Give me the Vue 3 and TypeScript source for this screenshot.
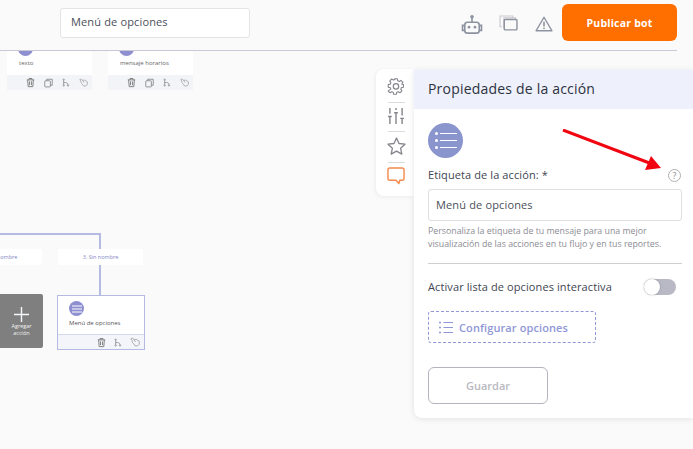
<script setup lang="ts">
const topNodes = [
  { label: 'texto', left: 7 },
  { label: 'mensaje horarios', left: 108 },
]
</script>

<template>
  <div class="page">
    <header class="topbar">
      <div class="name-input">Menú de opciones</div>
      <div class="top-actions">
        <svg class="ic-bot" width="22" height="19" viewBox="0 0 24 21" fill="none" stroke="#8d93a0" stroke-width="1.8">
          <circle cx="12" cy="2" r="2" fill="#8d93a0" stroke="none" />
          <path d="M12 3v5" />
          <rect x="4" y="8" width="16" height="12" rx="3" />
          <path d="M4 11.500H1.500v5.500H4M20 11.500h2.500v5.500H20" />
          <circle cx="8.700" cy="13.500" r="1.500" fill="#8d93a0" stroke="none" />
          <circle cx="15.300" cy="13.500" r="1.500" fill="#8d93a0" stroke="none" />
        </svg>
        <svg class="ic-copy" width="19" height="16" viewBox="0 0 20 17" fill="none">
          <path d="M3 12.500H1V1h13.500v2" stroke="#c9c9cf" stroke-width="1.200" />
          <path d="M5 14V3h12.500v2" stroke="#c9c9cf" stroke-width="1.200" />
          <rect x="5.500" y="4.800" width="13.500" height="11" rx="1" stroke="#8d93a0" stroke-width="1.500" fill="#fafafa" />
        </svg>
        <svg class="ic-warn" width="18" height="18" viewBox="0 0 20 18" fill="none">
          <path d="M10 1.500 1.200 16.500h17.600z" stroke="#8d93a0" stroke-width="1.600" stroke-linejoin="round" />
          <path d="M10 6.500v5.200" stroke="#8d93a0" stroke-width="1.800" />
          <circle cx="10" cy="13.800" r="1" fill="#8d93a0" />
        </svg>
        <button class="publish">Publicar bot</button>
      </div>
    </header>

    <div v-for="n in topNodes" :key="n.label" class="top-node" :style="{ left: n.left + 'px' }">
      <div class="top-node-body">
        <span class="dot clipped"></span>
        <span class="node-text">{{ n.label }}</span>
      </div>
      <div class="node-tools">
        <svg width="9" height="11" viewBox="0 0 12 13" fill="none" stroke="#808080" stroke-width="1.300"><path d="M1 3h10M4 3V1.200h4V3M2.200 3l.7 9h6.200l.7-9M4.700 5v5M7.300 5v5" /></svg>
        <svg width="9" height="10" viewBox="0 0 12 12" fill="none" stroke="#8a8a8a" stroke-width="1.200"><rect x="1" y="3" width="7.500" height="8.200" rx="1" /><path d="M3.500 3V1h7.500v8H8.500" /></svg>
        <svg width="8" height="11" viewBox="0 0 12 12" fill="none" stroke="#8a8a8a" stroke-width="1.200"><circle cx="2.500" cy="1.800" r="1" /><circle cx="2.500" cy="10.400" r="1" /><circle cx="9" cy="10.400" r="1" /><path d="M2.500 3v6.400M2.500 6c3 0 6.500 0 6.500 3.400" /></svg>
        <svg width="9" height="9" viewBox="0 0 13 12" fill="none" stroke="#a0a0a0" stroke-width="1.100"><path d="M1 2 3 1l2.500 2L8 2.500 12 5v4l-2 2H6.500L5 8.500 2.500 6 3 4z" /><path d="M5.500 3 7 6" /></svg>
      </div>
    </div>

    <div class="connector-h"></div>
    <div class="connector-v"></div>
    <div class="branch branch-left">2. Sin nombre</div>
    <div class="branch branch-right">3. Sin nombre</div>

    <div class="add-action">
      <svg class="plus" width="15" height="15" viewBox="0 0 15 15" stroke="#f4f8fb" stroke-width="1.400">
        <path d="M0 7.500h15M7.500 0v15" />
      </svg>
      <span class="add-text">Agregar<br />acción</span>
    </div>

    <div class="menu-node">
      <div class="menu-body">
        <span class="dot">
          <svg width="10" height="8" viewBox="0 0 10 8" stroke="#fff" stroke-width="1"><path d="M0 1h10M0 4h10M0 7h10" /></svg>
        </span>
        <span class="node-text dark">Menú de opciones</span>
      </div>
      <div class="menu-tools">
        <svg width="9" height="11" viewBox="0 0 12 13" fill="none" stroke="#808080" stroke-width="1.300"><path d="M1 3h10M4 3V1.200h4V3M2.200 3l.7 9h6.200l.7-9M4.700 5v5M7.300 5v5" /></svg>
        <svg width="8" height="11" viewBox="0 0 12 12" fill="none" stroke="#8a8a8a" stroke-width="1.200"><circle cx="2.500" cy="1.800" r="1" /><circle cx="2.500" cy="10.400" r="1" /><circle cx="9" cy="10.400" r="1" /><path d="M2.500 3v6.400M2.500 6c3 0 6.500 0 6.500 3.400" /></svg>
        <svg width="10" height="10" viewBox="0 0 13 12" fill="none" stroke="#a0a0a0" stroke-width="1.100"><path d="M1 2 3 1l2.500 2L8 2.500 12 5v4l-2 2H6.500L5 8.500 2.500 6 3 4z" /><path d="M5.500 3 7 6" /></svg>
      </div>
    </div>

    <div class="side-wrap">
      <nav class="tabs">
        <svg class="tab" width="18" height="18" viewBox="0 0 24 24" fill="none" stroke="#85858d" stroke-width="1.600" stroke-linejoin="round">
          <path d="M10 2h4l.6 3 2.200 1 2.600-1.600 2.800 2.900L20.600 10l.4 0 2 .6v3.800l-3 .7-.9 2.200 1.600 2.600-2.800 2.800-2.600-1.600-2.200.9-.6 3h-4l-.6-3-2.200-.9-2.600 1.600-2.800-2.800L4.400 17.300 3.500 15.100l-3-.7v-3.800l3-.7.9-2.200L2.800 5.100 5.600 2.300l2.600 1.600 2.200-.9z" transform="translate(1.200 .6) scale(.9)" />
          <circle cx="12" cy="12.500" r="3.600" />
        </svg>
        <i class="sep"></i>
        <svg class="tab" width="18" height="16" viewBox="0 0 19 17" fill="none" stroke="#85858d" stroke-width="1.500">
          <path d="M3 0v6M1 9h4M3 9v8M9.500 0v2M7.500 5h4M9.500 5v12M16 0v8M14 11h4M16 11v6" />
        </svg>
        <i class="sep"></i>
        <svg class="tab" width="19" height="18" viewBox="0 0 19 18" fill="none" stroke="#85858d" stroke-width="1.300" stroke-linejoin="round">
          <path d="m9.500 1 2.500 5.500 6 .7-4.400 4 1.200 5.900-5.300-3-5.300 3 1.200-5.900-4.400-4 6-.7z" />
        </svg>
        <i class="sep"></i>
        <svg class="tab chat" width="18" height="18" viewBox="0 0 19 19" fill="none" stroke="#f58a4b" stroke-width="1.500" stroke-linejoin="round">
          <path d="M3 1h13a2 2 0 0 1 2 2v9a2 2 0 0 1-2 2h-2.500l-1 3.500L9.500 14H3a2 2 0 0 1-2-2V3a2 2 0 0 1 2-2z" />
        </svg>
      </nav>

      <section class="panel">
        <h2 class="panel-title">Propiedades de la acción</h2>
        <div class="panel-body">
          <span class="big-dot">
            <svg width="22" height="17" viewBox="0 0 22 17" fill="none">
              <g fill="#fff"><circle cx="1.500" cy="1.500" r="1.500" /><circle cx="1.500" cy="8.500" r="1.500" /><circle cx="1.500" cy="15.500" r="1.500" /></g>
              <path d="M5 1.500h17M5 8.500h17M5 15.500h17" stroke="#fff" stroke-width="1" />
            </svg>
          </span>
          <div class="label-row">
            <span>Etiqueta de la acción: *</span>
            <span class="help">?</span>
          </div>
          <div class="field">Menú de opciones</div>
          <p class="hint">Personaliza la etiqueta de tu mensaje para una mejor visualización de las acciones en tu flujo y en tus reportes.</p>
          <hr class="rule" />
          <div class="toggle-row">
            <span>Activar lista de opciones interactiva</span>
            <span class="switch"><span class="knob"></span></span>
          </div>
          <button class="config">
            <svg width="14" height="13" viewBox="0 0 14 13" fill="none">
              <g fill="#8f97d6"><circle cx="1" cy="1.500" r="1" /><circle cx="1" cy="6.500" r="1" /><circle cx="1" cy="11.500" r="1" /></g>
              <path d="M4.500 1.500H14M4.500 6.500H14M4.500 11.500H14" stroke="#8f97d6" stroke-width="1.200" />
            </svg>
            Configurar opciones
          </button>
          <button class="save">Guardar</button>
        </div>
      </section>
    </div>

    <svg class="arrow" width="120" height="50" viewBox="0 0 120 50">
      <path d="M1 1 90 35" stroke="#f00511" stroke-width="3" />
      <path d="M99 39 83 41 89 27z" fill="#f00511" />
    </svg>
  </div>
</template>

<style>
html, body { margin: 0; padding: 0; }
</style>

<style scoped>
.page {
  position: relative;
  width: 693px;
  height: 449px;
  overflow: hidden;
  background: #fafafa;
  font-family: "Open Sans", "Noto Sans", sans-serif;
  color: #3d4450;
}
.topbar {
  box-sizing: border-box;
  width: 677px;
  height: 51px;
  border-bottom: 1px solid #c9c9d6;
  padding: 4px 0 0 60px;
  display: flex;
  justify-content: space-between;
  align-items: flex-start;
}
.name-input {
  box-sizing: border-box;
  width: 190px;
  height: 30px;
  margin-top: 4px;
  background: #fff;
  border: 1px solid #e3e3e8;
  border-radius: 3px;
  padding-left: 10px;
  font-size: 11px;
  line-height: 26px;
  letter-spacing: 0.15px;
  color: #4a4f5a;
}
.top-actions { display: flex; align-items: flex-start; }
.ic-bot { margin-top: 11px; }
.ic-copy { margin: 11px 0 0 16px; }
.ic-warn { margin: 11px 0 0 17px; }
.publish {
  width: 115px;
  height: 37px;
  margin-left: 9px;
  border: 0;
  border-radius: 6px;
  background: #ff6f00;
  color: #fff;
  font: 700 10.500px "Open Sans", sans-serif;
  letter-spacing: 0.2px;
}
.top-node {
  position: absolute;
  top: 51px;
  width: 85px;
}
.top-node-body {
  position: relative;
  height: 24px;
  background: #fff;
  overflow: hidden;
}
.dot {
  width: 15px;
  height: 15px;
  border-radius: 50%;
  background: #8d8fd0;
  display: flex;
  align-items: center;
  justify-content: center;
}
.dot.clipped { position: absolute; top: -10px; left: 11px; }
.node-text {
  position: absolute;
  left: 12px;
  top: 7px;
  font-size: 6px;
  line-height: 10px;
  color: #666;
  white-space: nowrap;
}
.node-tools {
  height: 15px;
  background: #f3f4f8;
  display: flex;
  justify-content: flex-end;
  align-items: center;
  gap: 9px;
  padding-right: 4px;
}
.connector-h {
  position: absolute;
  left: 0;
  top: 233px;
  width: 100px;
  height: 2px;
  background: #b5bae3;
}
.connector-v {
  position: absolute;
  left: 99px;
  top: 233px;
  width: 2px;
  height: 62px;
  background: #b5bae3;
}
.branch {
  position: absolute;
  top: 249px;
  height: 16px;
  width: 85px;
  background: #fff;
  border-radius: 2px;
  font-size: 5.500px;
  line-height: 16px;
  color: #8488c4;
  text-align: center;
}
.branch-left { left: -43px; }
.branch-right { left: 58px; }
.add-action {
  position: absolute;
  left: 0;
  top: 294px;
  box-sizing: border-box;
  width: 43px;
  height: 54px;
  padding-top: 13px;
  background: #7f7f7f;
  border-radius: 0 2px 2px 0;
  color: #fff;
  text-align: center;
}
.plus { display: block; margin: 0 auto 1px; }
.add-text { display: block; font-size: 5.500px; line-height: 7px; color: #f4f4f4; }
.menu-node {
  position: absolute;
  left: 57px;
  top: 295px;
  box-sizing: border-box;
  width: 88px;
  height: 55px;
  border: 1px solid #b5bae3;
  background: #fff;
}
.menu-body { position: relative; height: 38px; }
.menu-body .dot { position: absolute; left: 11px; top: 5px; }
.menu-body .node-text { left: 11px; top: 22px; }
.node-text.dark { color: #555; }
.menu-tools {
  height: 14px;
  border-top: 1px solid #d6d9ee;
  background: #f4f5fb;
  display: flex;
  justify-content: flex-end;
  align-items: center;
  gap: 8px;
  padding-right: 4px;
}
.side-wrap {
  position: absolute;
  left: 376px;
  top: 69px;
  display: flex;
  align-items: flex-start;
}
.tabs {
  box-sizing: border-box;
  width: 38px;
  height: 127px;
  padding: 8px 0 0 2px;
  background: #fff;
  border-radius: 8px 0 0 8px;
  box-shadow: -1px 1px 4px rgba(0, 0, 0, .06);
  display: flex;
  flex-direction: column;
  align-items: center;
}
.tab { flex: none; }
.chat { margin-top: -1px; }
.sep { display: block; flex: none; width: 17px; height: 1px; margin: 7px 0 5px; background: #dcdcdc; }
.panel {
  margin-top: 1px;
  width: 279px;
  height: 348px;
  background: #fff;
  border-radius: 0 0 0 8px;
  box-shadow: 0 1px 6px rgba(0, 0, 0, .1);
}
.panel-title {
  margin: 0;
  height: 39px;
  background: #eef0fb;
  padding-left: 14px;
  font-size: 14px;
  font-weight: 400;
  line-height: 37px;
  letter-spacing: 0.2px;
  color: #2c3240;
}
.panel-body {
  box-sizing: border-box;
  width: 254px;
  margin-left: 14px;
  padding-top: 14px;
  font-size: 11px;
}
.big-dot {
  width: 35px;
  height: 35px;
  border-radius: 50%;
  background: #8a94cd;
  display: flex;
  align-items: center;
  justify-content: center;
}
.label-row {
  height: 20px;
  margin-top: 7px;
  display: flex;
  justify-content: space-between;
  align-items: center;
  line-height: 16px;
  letter-spacing: 0.1px;
  color: #414652;
}
.help {
  box-sizing: border-box;
  width: 13px;
  height: 13px;
  margin-right: 1px;
  border: 1px solid #b0b0b0;
  border-radius: 50%;
  font-size: 9px;
  line-height: 11px;
  text-align: center;
  color: #8a8a8a;
}
.field {
  box-sizing: border-box;
  height: 32px;
  margin-top: 4px;
  border: 1px solid #dedee3;
  border-radius: 3px;
  padding-left: 7px;
  font-size: 11px;
  line-height: 29px;
  letter-spacing: 0.15px;
  color: #4a4f5a;
}
.hint {
  margin: 4px 0 0;
  font-size: 8.800px;
  line-height: 13px;
  color: #8c8c94;
}
.rule { margin: 12px 0 0; border: 0; height: 1px; background: #cfcfcf; }
.toggle-row {
  height: 16px;
  margin-top: 15px;
  display: flex;
  justify-content: space-between;
  align-items: center;
  line-height: 16px;
  letter-spacing: 0.1px;
  color: #414652;
  padding-right: 6px;
}
.switch {
  position: relative;
  width: 32px;
  height: 16px;
  border-radius: 8px;
  background: #b9b9c6;
}
.knob {
  position: absolute;
  left: 0;
  top: 0;
  width: 16px;
  height: 16px;
  border-radius: 50%;
  background: #fff;
  box-shadow: 0 0 2px rgba(0, 0, 0, .3);
}
.config {
  box-sizing: border-box;
  display: flex;
  align-items: center;
  gap: 6px;
  width: 168px;
  height: 32px;
  margin-top: 16px;
  padding: 0 0 0 10px;
  background: #fff;
  border: 1px dashed #8f97d6;
  border-radius: 3px;
  font: 600 11px "Open Sans", sans-serif;
  letter-spacing: 0.1px;
  color: #8f97d6;
}
.save {
  display: block;
  box-sizing: border-box;
  width: 120px;
  height: 37px;
  margin-top: 24px;
  background: #fff;
  border: 1px solid #b4b4c0;
  border-radius: 6px;
  font: 600 11px "Open Sans", sans-serif;
  color: #b9b9c0;
}
.arrow {
  position: absolute;
  left: 562px;
  top: 129px;
}
</style>
